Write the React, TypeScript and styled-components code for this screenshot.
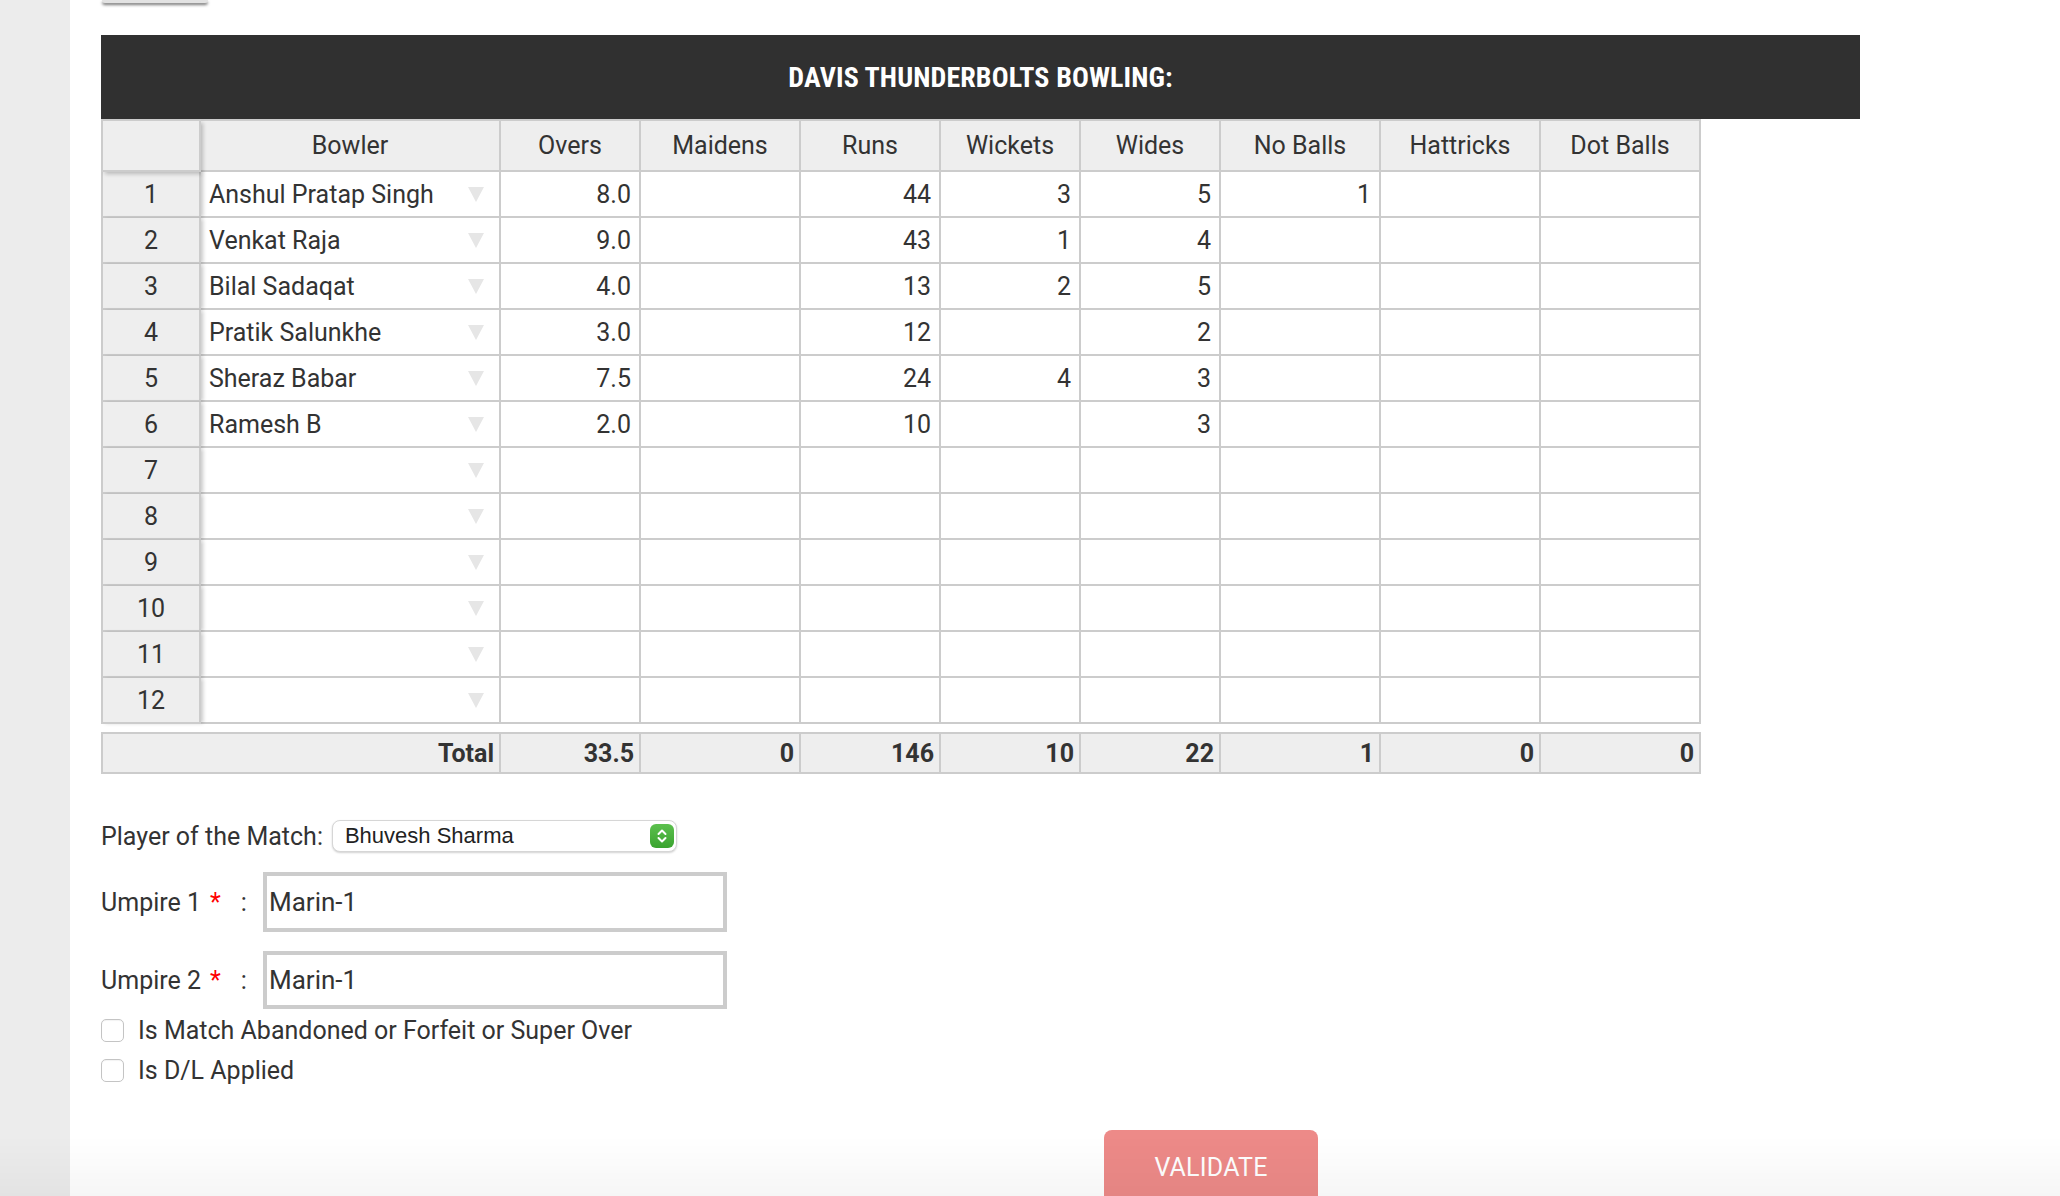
import React from "react";
import styled, { createGlobalStyle } from "styled-components";

const BASE = `Roboto, "Liberation Sans", Arial, sans-serif`;
const NARROW = `"Roboto Condensed", "Liberation Sans Narrow", "Arial Narrow", "DejaVu Sans Condensed", sans-serif`;
const COLS = "100px 300px 140px 160px 140px 140px 140px 160px 160px 160px";

const GlobalStyle = createGlobalStyle`
  html, body { margin: 0; padding: 0; background: #ffffff; }
  body { font-family: ${BASE}; color: #333333; }
  * { box-sizing: border-box; }
`;

const Page = styled.div`
  display: flex;
  width: 2060px;
  height: 1196px;
  overflow: hidden;
`;

const Sidebar = styled.aside`
  flex: none;
  width: 70px;
  background: #ececec;
`;

const Main = styled.main`
  flex: 1;
  padding-left: 31px;
  display: flex;
  flex-direction: column;
  align-items: flex-start;
  & > * {
    flex-shrink: 0;
  }
`;

const TopStub = styled.div`
  width: 106px;
  height: 3px;
  margin-left: 1px;
  background: #e2e2e2;
  box-shadow: 0 2px 3px rgba(0, 0, 0, 0.55);
  border-radius: 0 0 3px 3px;
`;

const SectionHeader = styled.div`
  margin-top: 32px;
  width: 1759px;
  height: 84px;
  background: #303030;
  color: #ffffff;
  display: flex;
  align-items: center;
  justify-content: center;
  font-family: ${NARROW};
  font-weight: 700;
  font-size: 28px;
  letter-spacing: 0.1px;
`;

const Grid = styled.div`
  display: grid;
  grid-template-columns: ${COLS};
  width: 1600px;
`;

const Cell = styled.div<{ $align?: "left" | "right" | "center"; $head?: boolean; $first?: boolean }>`
  height: ${(p) => (p.$head ? "53px" : "46px")};
  border-right: 2px solid #cccccc;
  border-bottom: 2px solid #cccccc;
  border-top: ${(p) => (p.$head ? "2px solid #cccccc" : "none")};
  border-left: ${(p) => (p.$first ? "2px solid #cccccc" : "none")};
  background: ${(p) => (p.$head ? "#eeeeee" : "#ffffff")};
  display: flex;
  align-items: center;
  justify-content: ${(p) =>
    p.$align === "left" ? "flex-start" : p.$align === "right" ? "flex-end" : "center"};
  padding: 0 8px;
  font-size: 25px;
  color: #333333;
  white-space: nowrap;
`;

const RowHead = styled(Cell)`
  background: #eeeeee;
  position: relative;
  z-index: 1;
  box-shadow: 3px 0 4px -1px rgba(0, 0, 0, 0.22);
`;

const Corner = styled(Cell)`
  position: relative;
  z-index: 2;
  box-shadow: 3px 3px 4px -1px rgba(0, 0, 0, 0.22);
`;

const BowlerCell = styled(Cell)`
  justify-content: space-between;
  padding-right: 15px;
`;

const Arrow = styled.svg`
  width: 16px;
  height: 15px;
  flex: none;
`;

const TotalGrid = styled(Grid)`
  margin-top: 8px;
`;

const TotalCell = styled.div<{ $span?: number; $first?: boolean }>`
  grid-column: span ${(p) => p.$span ?? 1};
  height: 42px;
  background: #eeeeee;
  border-top: 2px solid #cccccc;
  border-bottom: 2px solid #cccccc;
  border-right: 2px solid #cccccc;
  border-left: ${(p) => (p.$first ? "2px solid #cccccc" : "none")};
  display: flex;
  align-items: center;
  justify-content: flex-end;
  padding-right: 5px;
  font-size: 25px;
  font-weight: 700;
  color: #333333;
`;

const Form = styled.section`
  margin-top: 46px;
  display: flex;
  flex-direction: column;
  align-items: flex-start;
`;

const PlayerRow = styled.div`
  display: flex;
  align-items: center;
  height: 32px;
  gap: 9px;
`;

const Label = styled.label`
  font-size: 25px;
  color: #333333;
  white-space: nowrap;
`;

const SelectBox = styled.div`
  width: 345px;
  height: 32px;
  border: 1px solid #d6d6d6;
  border-radius: 8px;
  background: #ffffff;
  box-shadow: 0 1px 2px rgba(0, 0, 0, 0.18);
  display: flex;
  align-items: center;
  justify-content: space-between;
  padding: 0 2px 0 12px;
  font-family: "Liberation Sans", Arial, sans-serif;
  font-size: 22px;
  color: #222222;
`;

const Stepper = styled.span`
  width: 24px;
  height: 24px;
  border-radius: 6px;
  background: linear-gradient(#5cc04e, #3aa32f);
  display: flex;
  align-items: center;
  justify-content: center;
`;

const UmpireRow = styled.div<{ $top: number }>`
  margin-top: ${(p) => p.$top}px;
  display: flex;
  align-items: center;
`;

const UmpireLabel = styled.div`
  width: 162px;
  display: flex;
  align-items: center;
  font-size: 25px;
  color: #333333;
`;

const Star = styled.span`
  color: #ff0000;
  margin-left: 9px;
  font-size: 25px;
`;

const Colon = styled.span`
  margin-left: 20px;
`;

const TextInput = styled.input<{ $h: number }>`
  width: 464px;
  height: ${(p) => p.$h}px;
  border: 4px solid #cccccc;
  padding: 0 2px;
  font-family: ${BASE};
  font-size: 26px;
  color: #333333;
  outline: none;
  background: #ffffff;
`;

const CheckList = styled.div`
  margin-top: 1px;
  display: flex;
  flex-direction: column;
`;

const CheckRow = styled.label`
  height: 40px;
  display: flex;
  align-items: center;
  gap: 14px;
  font-size: 25px;
  color: #333333;
`;

const Box = styled.span`
  width: 23px;
  height: 23px;
  border: 1px solid #c4c4c4;
  border-radius: 5px;
  background: #ffffff;
  box-shadow: inset 0 1px 1px rgba(0, 0, 0, 0.05);
`;

const ValidateButton = styled.button`
  margin-top: 40px;
  margin-left: 1003px;
  width: 214px;
  height: 72px;
  border: none;
  border-radius: 8px 8px 0 0;
  background: #ed8a88;
  color: #ffffff;
  font-family: ${BASE};
  font-size: 25px;
  letter-spacing: 0.2px;
  display: flex;
  justify-content: center;
  padding-top: 23px;
`;

const BottomFade = styled.div`
  position: fixed;
  left: 0;
  right: 0;
  bottom: 0;
  height: 60px;
  pointer-events: none;
  background: linear-gradient(rgba(0, 0, 0, 0), rgba(0, 0, 0, 0.035));
`;

type Row = { name: string; overs: string; maidens: string; runs: string; wickets: string; wides: string; noBalls: string };

const rows: Row[] = [
  { name: "Anshul Pratap Singh", overs: "8.0", maidens: "", runs: "44", wickets: "3", wides: "5", noBalls: "1" },
  { name: "Venkat Raja", overs: "9.0", maidens: "", runs: "43", wickets: "1", wides: "4", noBalls: "" },
  { name: "Bilal Sadaqat", overs: "4.0", maidens: "", runs: "13", wickets: "2", wides: "5", noBalls: "" },
  { name: "Pratik Salunkhe", overs: "3.0", maidens: "", runs: "12", wickets: "", wides: "2", noBalls: "" },
  { name: "Sheraz Babar", overs: "7.5", maidens: "", runs: "24", wickets: "4", wides: "3", noBalls: "" },
  { name: "Ramesh B", overs: "2.0", maidens: "", runs: "10", wickets: "", wides: "3", noBalls: "" },
];

const headers = ["Bowler", "Overs", "Maidens", "Runs", "Wickets", "Wides", "No Balls", "Hattricks", "Dot Balls"];
const totals = ["33.5", "0", "146", "10", "22", "1", "0", "0"];

const DownArrow = () => (
  <Arrow viewBox="0 0 16 15">
    <polygon points="0,0 16,0 8,15" fill="#e6e6e6" />
  </Arrow>
);

export default function App() {
  const allRows: (Row | null)[] = [...rows, ...Array(6).fill(null)];
  return (
    <>
      <GlobalStyle />
      <Page>
        <Sidebar />
        <Main>
          <TopStub />
          <SectionHeader>DAVIS THUNDERBOLTS BOWLING:</SectionHeader>
          <Grid>
            <Corner $head $first />
            {headers.map((h) => (
              <Cell key={h} $head>
                {h}
              </Cell>
            ))}
            {allRows.map((r, i) => (
              <React.Fragment key={i}>
                <RowHead $first>{i + 1}</RowHead>
                <BowlerCell $align="left">
                  <span>{r?.name ?? ""}</span>
                  <DownArrow />
                </BowlerCell>
                <Cell $align="right">{r?.overs ?? ""}</Cell>
                <Cell $align="right">{r?.maidens ?? ""}</Cell>
                <Cell $align="right">{r?.runs ?? ""}</Cell>
                <Cell $align="right">{r?.wickets ?? ""}</Cell>
                <Cell $align="right">{r?.wides ?? ""}</Cell>
                <Cell $align="right">{r?.noBalls ?? ""}</Cell>
                <Cell $align="right" />
                <Cell $align="right" />
              </React.Fragment>
            ))}
          </Grid>
          <TotalGrid>
            <TotalCell $span={2} $first>
              Total
            </TotalCell>
            {totals.map((t, i) => (
              <TotalCell key={i}>{t}</TotalCell>
            ))}
          </TotalGrid>
          <Form>
            <PlayerRow>
              <Label>Player of the Match:</Label>
              <SelectBox>
                <span>Bhuvesh Sharma</span>
                <Stepper>
                  <svg width="12" height="18" viewBox="0 0 12 18">
                    <path d="M2.5 7 L6 3.5 L9.5 7 M2.5 11 L6 14.5 L9.5 11" fill="none" stroke="#ffffff" strokeWidth="2" strokeLinecap="round" strokeLinejoin="round" />
                  </svg>
                </Stepper>
              </SelectBox>
            </PlayerRow>
            <UmpireRow $top={20}>
              <UmpireLabel>
                Umpire 1<Star>*</Star>
                <Colon>:</Colon>
              </UmpireLabel>
              <TextInput $h={60} defaultValue="Marin-1" />
            </UmpireRow>
            <UmpireRow $top={19}>
              <UmpireLabel>
                Umpire 2<Star>*</Star>
                <Colon>:</Colon>
              </UmpireLabel>
              <TextInput $h={58} defaultValue="Marin-1" />
            </UmpireRow>
            <CheckList>
              <CheckRow>
                <Box />
                Is Match Abandoned or Forfeit or Super Over
              </CheckRow>
              <CheckRow>
                <Box />
                Is D/L Applied
              </CheckRow>
            </CheckList>
          </Form>
          <ValidateButton type="button">VALIDATE</ValidateButton>
        </Main>
      </Page>
      <BottomFade />
    </>
  );
}
